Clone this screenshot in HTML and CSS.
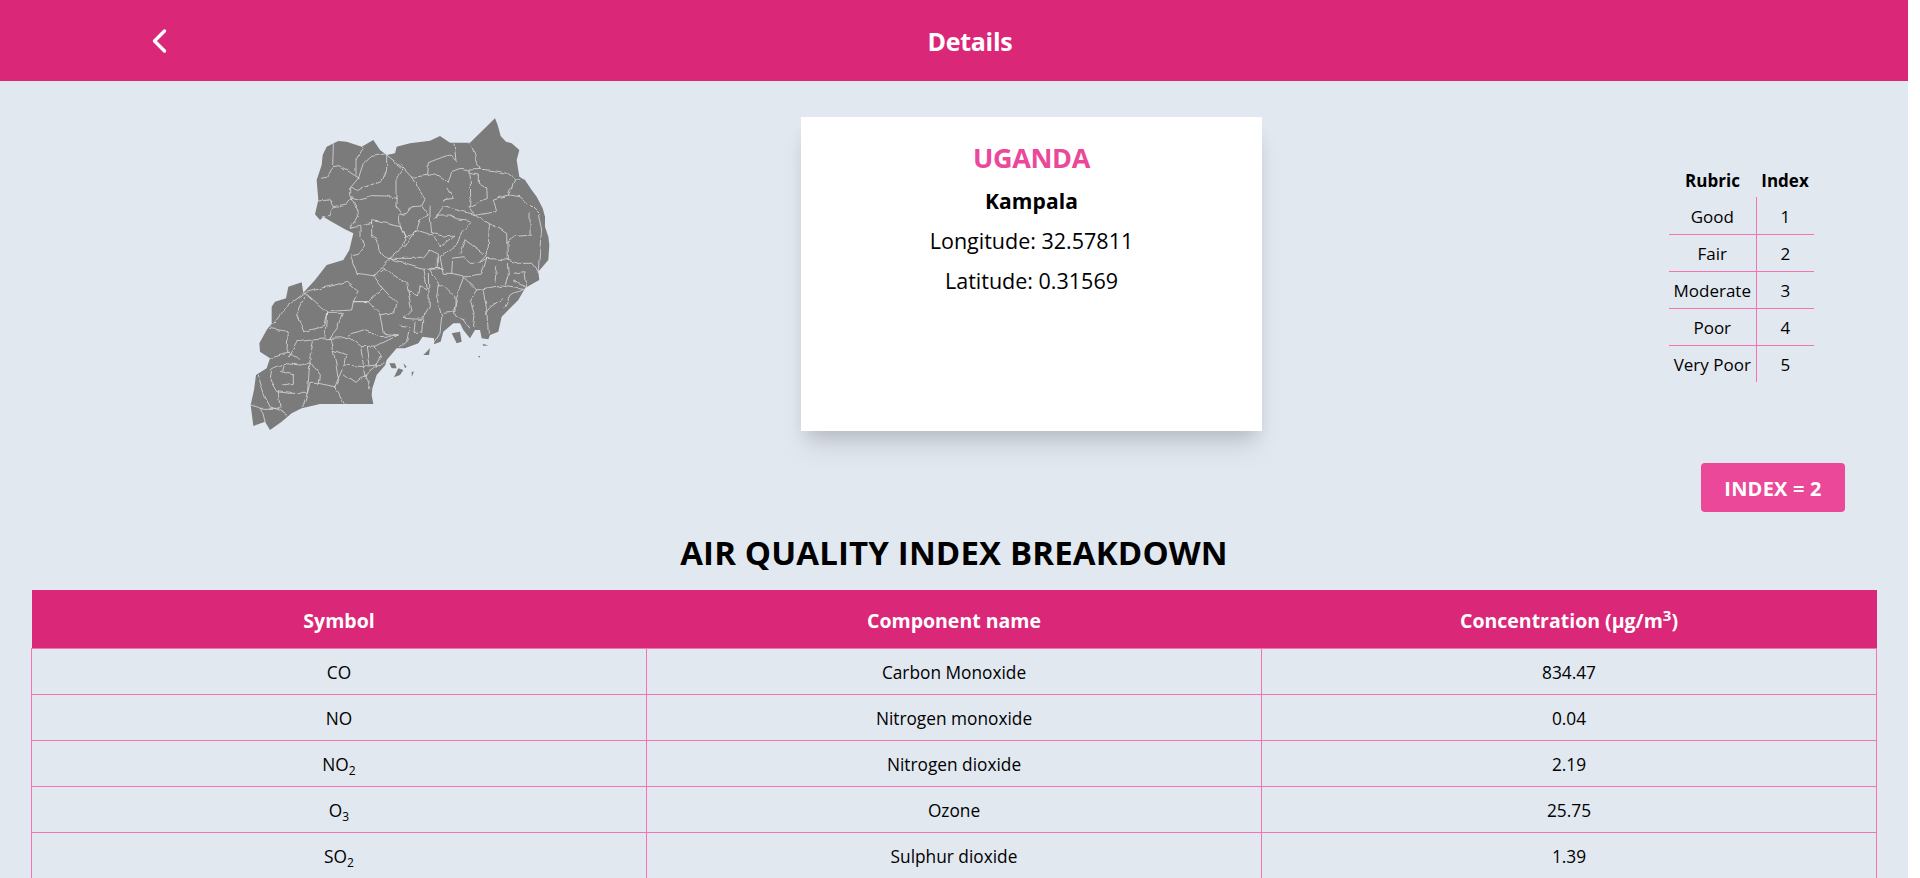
FILE: index.html
```html
<!DOCTYPE html>
<html lang="en">
<head>
<meta charset="utf-8">
<title>Details</title>
<link rel="stylesheet" href="styles.css">
</head>
<body>
<main class="page">
  <header class="topbar">
    <a class="back" href="#" aria-label="Back">
      <svg viewBox="0 0 16 26" width="16" height="26" fill="none" stroke="#fff" stroke-width="3.4" stroke-linecap="round" stroke-linejoin="round"><path d="M13.5 3 L3.5 13 L13.5 23"/></svg>
    </a>
    <h1 class="title">Details</h1>
  </header>
  <section class="summary">
    <div class="map-col">
      <svg class="map" viewBox="0 0 1050 1050" width="350" height="350">
        <defs>
          <filter id="wobble" x="-5%" y="-5%" width="110%" height="110%">
            <feTurbulence type="fractalNoise" baseFrequency="0.035" numOctaves="2" seed="4"/>
            <feDisplacementMap in="SourceGraphic" scale="14" xChannelSelector="R" yChannelSelector="G"/>
          </filter>
        </defs>
        <path class="land" d="M795 55 803 75 812 108 828 125 845 130 868 150 860 180 868 230 885 240 905 270 920 290 938 325 945 350 945 380 955 410 958 435 955 480 925 515 928 540 905 553 885 565 865 600 840 625 815 650 805 695 780 705 775 718 755 715 750 690 735 690 720 715 700 690 690 670 670 670 640 695 632 725 612 733 612 715 578 710 565 730 525 745 500 745 470 780 466 795 440 825 427 865 425 885 430 912 270 912 235 920 215 925 185 940 155 965 120 990 105 965 70 978 62 915 72 870 78 825 110 805 120 775 90 755 88 730 110 690 125 670 125 620 135 605 168 595 175 560 215 547 220 578 255 540 290 495 340 480 358 450 370 400 345 388 305 365 280 350 270 360 255 343 265 300 260 240 275 195 278 165 290 140 325 123 350 125 395 140 430 120 450 150 470 165 495 160 500 140 540 130 600 122 630 108 660 128 720 128Z"/>
        <path class="land" d="M665 700 690 695 695 725 680 730ZM478 790 495 790 500 805 485 805ZM492 832 505 805 520 810 510 825ZM520 790 530 800 525 805ZM545 815 552 815 545 830ZM580 765 600 745 597 765ZM758 732 775 736 760 738ZM744 768 750 768 748 774Z"/>
        <path class="dist" filter="url(#wobble)" d="M310 135 308 200M275 235 290 232 308 200 330 197 372 225 388 235M400 140 378 180 378 225M385 235 400 190 420 170 470 160 470 210 455 245 400 262 380 275 362 262 385 235M362 262 362 290 375 315 385 340 362 385M265 300 295 297 310 320 350 312 368 290M310 320 300 350 280 350M362 290 385 298 425 287 470 288 498 295 498 320 512 340M470 165 520 205 498 235 498 295M520 205 545 232 585 298 575 318 545 320 530 340 507 345 510 375 525 410 540 410 560 390 570 360 595 345 575 318M545 232 600 225 618 222 640 235 655 250 665 215 690 205 720 210 750 208 720 128M672 130 678 182 660 165 620 178 595 188 593 225M720 210 722 290 718 320 735 345M750 208 790 212 830 220 855 240 885 238M855 240 835 285 790 297 800 335 742 345 640 320 615 355M722 220 745 225 745 250 770 265 772 295 720 318M835 285 870 290 900 315 925 340 935 390 930 440 925 515M900 340 900 405 855 410 830 428M745 350 780 372 830 400 832 480M778 372 775 440 765 470 745 490 720 490 700 470 668 475 665 520 700 528M650 260 670 295 640 300M600 318 600 345 605 400 640 408 675 405 630 440 610 410M480 475 520 440 525 410 510 380 470 370 425 362 425 410 440 420 445 455 470 475 480 475M390 375 390 410 405 435 385 460 362 465M360 385 425 370M362 470 380 520 430 527 480 475 578 505 590 570 570 560 565 590 535 570M480 475 580 475 600 450 625 462 625 505 580 505M525 440 560 390 605 405M620 345 660 345 685 360 725 365 690 405 680 435 630 470 640 520 665 520M705 420 690 460M705 420 760 460M745 490 770 475 832 480 865 490 905 490 925 515M770 475 755 525 720 530 700 530 740 570 815 555 880 565M800 500 795 545M832 490 835 525 825 555M850 520 885 515 890 560 850 540M580 505 600 508 640 505M600 510 625 550 620 590 635 650 630 700 612 730M595 520 598 620 575 658 520 655M625 555 650 565 675 590 675 635 640 640M700 530 685 575 670 640 700 660 720 685M740 570 720 600 735 650 730 680M760 570 770 630 775 700M815 600 780 625 770 640M880 565 840 590 825 620M430 527 458 565 415 605 370 605 385 575 350 545 225 578 290 635 365 630 370 605M460 510 440 525M458 505 530 550 545 630 520 655M458 565 500 610 495 635 450 645 460 700 505 705 435 740M370 605 415 605 450 645M225 578 170 620 120 685M225 590 200 645 220 695 280 680 290 640 340 640 320 690 300 715 200 725 175 770M290 635 285 712M120 685 175 695 170 760 120 775M170 760 210 775M300 715 308 750 350 765 345 795 400 800 465 792M310 750 325 835 340 795M250 725 240 770 240 785 268 825 265 850 315 860 325 835M315 860 345 910M265 850 240 850 232 880 218 920M355 705 400 690 450 710 505 705M300 715 355 712 392 740 435 738M392 740 400 795M412 740 420 795M435 740 455 770 440 795M340 825 375 850 405 825 420 870M400 800 405 825 440 795M510 675 540 680 530 720 505 740M555 665 552 700 575 700 578 660M120 810 160 790 210 795 240 785 232 880 180 880 140 875 120 840 125 810M160 790 155 815 190 825 190 850 160 855M85 825 105 890 120 920 145 930 170 945M62 915 95 925 105 965M95 925 145 925M145 875 150 925"/>
      </svg>
    </div>
    <div class="card">
      <h2 class="country">UGANDA</h2>
      <p class="city">Kampala</p>
      <p class="coord">Longitude: 32.57811</p>
      <p class="coord">Latitude: 0.31569</p>
    </div>
    <div class="side">
      <table class="rubric">
        <thead><tr><th>Rubric</th><th>Index</th></tr></thead>
        <tbody>
          <tr><td>Good</td><td>1</td></tr>
          <tr><td>Fair</td><td>2</td></tr>
          <tr><td>Moderate</td><td>3</td></tr>
          <tr><td>Poor</td><td>4</td></tr>
          <tr><td>Very Poor</td><td>5</td></tr>
        </tbody>
      </table>
      <button class="badge">INDEX = 2</button>
    </div>
  </section>
  <h2 class="heading">AIR QUALITY INDEX BREAKDOWN</h2>
  <table class="breakdown">
    <thead>
      <tr><th>Symbol</th><th>Component name</th><th>Concentration (μg/m<sup>3</sup>)</th></tr>
    </thead>
    <tbody>
      <tr><td>CO</td><td>Carbon Monoxide</td><td>834.47</td></tr>
      <tr><td>NO</td><td>Nitrogen monoxide</td><td>0.04</td></tr>
      <tr><td>NO<sub>2</sub></td><td>Nitrogen dioxide</td><td>2.19</td></tr>
      <tr><td>O<sub>3</sub></td><td>Ozone</td><td>25.75</td></tr>
      <tr><td>SO<sub>2</sub></td><td>Sulphur dioxide</td><td>1.39</td></tr>
    </tbody>
  </table>
</main>
</body>
</html>
```
FILE: styles.css
```css
* { box-sizing: border-box; }
html, body { margin: 0; height: 100%; background: #fff; overflow: hidden; }
body { font-family: "Open Sans", "Noto Sans", sans-serif; color: #000; }
.page { width: 1908px; height: 878px; overflow: hidden; background: #e2e8f0; }

.topbar { height: 81px; background: #db2777; display: flex; align-items: center; padding-left: 151px; }
.back { display: flex; width: 16px; }
.title { margin: 0; flex: 1; padding-right: 135px; text-align: center; color: #fff; font-size: 25px; font-weight: 700; letter-spacing: -0.3px; }

.summary { display: flex; height: 431px; padding-top: 36px; position: relative; }
.map-col { width: 801px; padding: 0 0 0 230px; margin-top: -17px; flex: none; }
.map { display: block; }
.land { fill: #7b7b7b; }
.dist { fill: none; stroke: #d9dce0; stroke-width: 2.4; stroke-linejoin: round; stroke-linecap: round; }

.card { width: 461px; height: 314px; flex: none; background: #fff; padding-top: 21px; text-align: center; box-shadow: 0 20px 25px -5px rgba(0,0,0,.1), 0 10px 16px -6px rgba(0,0,0,.12); }
.country { margin: 0; color: #ec4899; font-size: 27px; line-height: 40px; font-weight: 700; letter-spacing: -0.35px; }
.city { margin: 3px 0 0; font-size: 21px; line-height: 40px; font-weight: 700; letter-spacing: 0.1px; }
.coord { margin: 0; font-size: 21.5px; line-height: 40.4px; letter-spacing: 0; }

.side { flex: 1; position: relative; }
.rubric { border-collapse: collapse; margin: 47px 0 0 407px; font-size: 17px; }
.rubric th { height: 33px; font-weight: 700; padding: 0; }
.rubric td { height: 37px; padding: 2px 0 0; text-align: center; border-top: 1px solid #f472b6; }
.rubric tbody tr:first-child td { border-top: 0; }
.rubric td:first-child, .rubric th:first-child { width: 87px; }
.rubric td:first-child { border-right: 1px solid #f472b6; }
.rubric td:last-child, .rubric th:last-child { width: 58px; }
.badge { position: absolute; left: 439px; top: 346px; width: 144px; height: 49px; border: 0; border-radius: 4px; padding: 2px 0 0; background: #ec4899; color: #fff; font: 700 20px "Open Sans", "Noto Sans", sans-serif; letter-spacing: 0.2px; }

.heading { margin: 16px 0 0; height: 62px; text-align: center; font-size: 33px; line-height: 50px; font-weight: 700; letter-spacing: 0.15px; }

.breakdown { width: 1846px; margin-left: 31px; border-collapse: collapse; table-layout: fixed; font-size: 17.3px; }
.breakdown th { height: 58px; padding: 3px 0 0; background: #db2777; color: #fff; font-size: 19.5px; font-weight: 700; }
.breakdown td { height: 46px; padding: 2px 0 0; text-align: center; border: 1px solid #f472b6; }
sub, sup { font-size: 12px; line-height: 0; }
.breakdown th sup { font-size: 15px; }
```
